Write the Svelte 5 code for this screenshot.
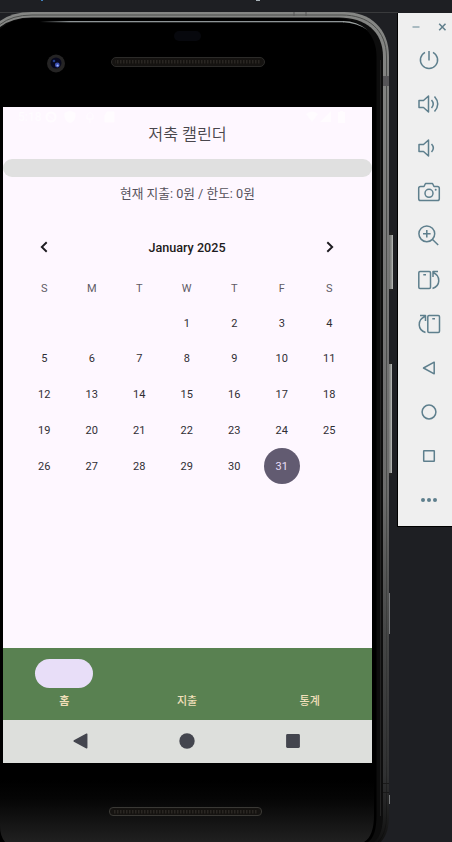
<script>
  const weekdays = ['S', 'M', 'T', 'W', 'T', 'F', 'S'];
  const days = [...Array(3).fill(null), ...Array.from({ length: 31 }, (_, i) => i + 1)];
  const selected = 31;
  const tabs = ['홈', '지출', '통계'];
  const tools = ['power', 'volup', 'voldown', 'camera', 'zoom', 'rotl', 'rotr', 'back', 'home', 'overview', 'more'];
</script>

<div class="desk">
  <svg class="frame" width="398" height="842" viewBox="0 0 398 842" aria-hidden="true">
    <defs>
      <linearGradient id="edge" x1="0" y1="0" x2="0" y2="1">
        <stop offset="0" stop-color="#858684" />
        <stop offset="0.3" stop-color="#787878" />
        <stop offset="0.58" stop-color="#6c6c6c" />
        <stop offset="0.75" stop-color="#454646" />
        <stop offset="0.92" stop-color="#303132" />
        <stop offset="1" stop-color="#111" />
      </linearGradient>
      <linearGradient id="rim" x1="0" y1="0" x2="0" y2="1">
        <stop offset="0" stop-color="#4b4d4b" />
        <stop offset="0.6" stop-color="#4b4d4b" />
        <stop offset="0.9" stop-color="#2a2b2b" />
        <stop offset="1" stop-color="#0c0c0c" />
      </linearGradient>
      <linearGradient id="chin" x1="0" y1="0" x2="0" y2="1">
        <stop offset="0" stop-color="#000" />
        <stop offset="0.3" stop-color="#050505" />
        <stop offset="1" stop-color="#202020" />
      </linearGradient>
      <linearGradient id="glint" x1="0" y1="0" x2="1" y2="0">
        <stop offset="0" stop-color="#8e9496" stop-opacity="0" />
        <stop offset="0.1" stop-color="#8e9496" />
        <stop offset="1" stop-color="#8e9496" />
      </linearGradient>
      <linearGradient id="button" x1="0" y1="0" x2="1" y2="0">
        <stop offset="0" stop-color="#686a68" />
        <stop offset="0.7" stop-color="#969896" />
        <stop offset="1" stop-color="#c0c2c0" />
      </linearGradient>
      <pattern id="mesh" width="3" height="5" patternUnits="userSpaceOnUse">
        <rect width="3" height="5" fill="#14120f" />
        <rect width="1.5" height="3.5" fill="#292622" />
      </pattern>
    </defs>
    <path d="M0 12.5H398" stroke="#393a3c" />
    <rect x="387" y="232" width="6" height="59" rx="1" fill="#222" />
    <rect x="389" y="235" width="4" height="54" fill="url(#button)" />
    <rect x="387" y="361" width="5" height="115" rx="1" fill="#222" />
    <rect x="388" y="364" width="4" height="109" fill="url(#button)" />
    <path d="M389.5 593v41M389.5 795v9" stroke="#77797b" />
    <path d="M0 21Q12 12 32 12H344C370 12 389 28 389 57V815C389 827 387 835 381 842H0Z" fill="url(#edge)" />
    <path d="M0 24.5Q12 15 32 15H342C368 15 386.500 30 386.500 57V815C386.500 827 384 836 378 842" fill="none" stroke="url(#rim)" />
    <path d="M0 27Q12 17.500 32 17.500H339C365 17.500 383 31 383 57V815C383 828 380 837 374 842H0Z" fill="#0d0d0d" />
    <path d="M0 29Q12 18 32 18H337C362 20 376.500 34 376.500 57V815C376.500 828 374 838 368 842H0Z" fill="#000" />
    <path d="M380.500 60V816" stroke="#222" />
    <path d="M0 780H374V815C374 828 371 838 364 842H5Q0 836 0 826Z" fill="url(#chin)" />
    <rect x="40" y="21" width="304" height="1.300" fill="url(#glint)" />
    <path d="M343 21Q357 21 367.500 30Q357 23 343 22.300Z" fill="#9ba1a0" />
    <path d="M294 12v4M306 12v4" stroke="#555" />
    <rect x="383" y="76" width="6" height="10" fill="#555457" />
    <path d="M383 783.500h6M383 792.500h6" stroke="#191919" />
    <rect x="174" y="31" width="27" height="10" rx="5" fill="#07080d" />
    <circle cx="56" cy="63.500" r="9" fill="#252424" />
    <circle cx="56" cy="63" r="5.500" fill="#07081d" />
    <circle cx="54" cy="61" r="1.300" fill="#213c89" />
    <circle cx="57.300" cy="65" r="2.400" fill="#3c50b4" />
    <circle cx="57.600" cy="65.500" r="1.100" fill="#a7bdff" />
    <rect x="111.500" y="57.500" width="153" height="9" rx="4.500" fill="#151311" stroke="#2c2b29" />
    <rect x="115" y="60" width="146" height="4" fill="url(#mesh)" />
    <rect x="109.500" y="807.500" width="152" height="8" rx="3.500" fill="#151311" stroke="#3a3935" />
    <rect x="113" y="809" width="145" height="5" fill="url(#mesh)" />
    <rect x="41" y="0" width="2" height="1" fill="#4382bd" />
    <rect x="256" y="0" width="4" height="1" fill="#a8b2b8" />
  </svg>

  <main class="screen">
    <div class="status">
      <span>5:18</span>
      <svg width="76" height="14" viewBox="0 0 76 14" fill="none" stroke="#fffcff">
        <circle cx="9" cy="7" r="4.500" stroke-width="2" /><path d="M5 4l8 7" />
        <path d="M23 3l5-2 5 2v4q0 4-5 6q-5-2-5-6z" fill="#fffcff" />
        <path d="M45 5q3-5 6 0v4h-6zM48 9v4" />
        <path d="M65 2h7v10h-9v-7z" fill="#fffcff" />
      </svg>
      <svg class="signal" width="42" height="14" viewBox="0 0 42 14" fill="#fffcff">
        <path d="M1 4q6-5 12 0l-6 8zM15 12L26 1v11zM33 2h2v-1h3v1h2v11h-7z" />
      </svg>
    </div>
    <h1>저축 캘린더</h1>
    <div class="progress"></div>
    <p class="summary">현재 지출: 0원 / 한도: 0원</p>

    <section class="calendar">
      <header>
        <svg width="16" height="16" viewBox="0 0 16 16"><path d="M10.700 3.200L5.800 8l4.900 4.800" /></svg>
        <span>January 2025</span>
        <svg width="16" height="16" viewBox="0 0 16 16"><path d="M5.300 3.200L10.200 8l-4.900 4.800" /></svg>
      </header>
      <div class="week">
        {#each weekdays as d}<span>{d}</span>{/each}
      </div>
      <div class="days">
        {#each days as day}
          <span class:selected={day === selected}>{day ?? ''}</span>
        {/each}
      </div>
    </section>

    <nav class="tabs">
      {#each tabs as tab, i}
        <div class="tab">
          <i class:active={i === 0}></i>
          <span class:bold={i === 0}>{tab}</span>
        </div>
      {/each}
    </nav>
    <div class="system">
      <svg width="18" height="18" viewBox="0 0 18 18"><path d="M2.200 9L14.700 2.200V15.800Z" stroke="#43454e" stroke-width="1.500" stroke-linejoin="round" /></svg>
      <svg width="18" height="18" viewBox="0 0 18 18"><circle cx="9" cy="9" r="7.700" /></svg>
      <svg width="18" height="18" viewBox="0 0 18 18"><rect x="2.100" y="2.100" width="13.800" height="13.800" rx="1.300" /></svg>
    </div>
  </main>

  <aside>
    <div class="window">
      <svg width="36" height="12" viewBox="0 0 36 12">
        <path d="M0.500 6h7" stroke="#92a9b2" stroke-width="1.500" />
        <path d="M27.200 2.700l6.300 6.600M33.500 2.700l-6.300 6.600" stroke="#607f8c" stroke-width="1.500" />
      </svg>
    </div>
    {#each tools as tool}
      <div class="tool">
        <svg width="24" height="24" viewBox="0 0 24 24">
          {#if tool === 'power'}
            <path d="M12 3v9.500M8 4.300a8.600 8.600 0 1 0 8 0" />
          {:else if tool === 'volup'}
            <path d="M2 8.500h4.500l5-4.500v16l-5-4.500H2zM14.500 8q3.500 4 0 8M17.500 4.500q6.500 7.500 0 15" />
          {:else if tool === 'voldown'}
            <path d="M2 8.500h4.500l5-4.500v16l-5-4.500H2zM14.500 8q3.700 4 0 8" />
          {:else if tool === 'camera'}
            <path d="M7 6.500L8.500 3.500h7L17 6.500h3.500q1.800 0 1.800 1.800v10.400q0 1.800-1.800 1.800h-17q-1.800 0-1.800-1.800V8.300q0-1.800 1.800-1.800z" />
            <circle cx="12" cy="13.300" r="4" /><circle class="fill" cx="18.700" cy="9.800" r="1" />
          {:else if tool === 'zoom'}
            <circle cx="9.800" cy="9.800" r="7.900" /><path d="M15.500 15.500l5.700 5.500M9.800 6v7.600M6 9.800h7.600" />
          {:else if tool === 'rotl'}
            <rect x="1.800" y="3.500" width="11.700" height="17" rx="1.200" />
            <path d="M6.300 6.800h2.700M15.500 20.500c8-2.500 8.500-12.500.7-16M21 3.600h-5v5.500" />
          {:else if tool === 'rotr'}
            <rect x="10.800" y="3.500" width="11.700" height="17" rx="1.200" />
            <path d="M15.300 6.800h2.700M8.500 20.500c-8-2.500-8.500-12.500-.7-16M3 3.600h5.500v5.500" />
          {:else if tool === 'back'}
            <path d="M6.500 12L17.200 6.200v11.600z" />
          {:else if tool === 'home'}
            <circle cx="12" cy="12" r="6.900" />
          {:else if tool === 'overview'}
            <rect x="6.700" y="6.700" width="10.600" height="10.600" rx=".4" />
          {:else}
            <g class="fill"><circle cx="6" cy="12" r="2" /><circle cx="12" cy="12" r="2" /><circle cx="18" cy="12" r="2" /></g>
          {/if}
        </svg>
      </div>
    {/each}
  </aside>
</div>

<style>
  :global(body) { margin: 0; background: #1e1f23; }
  .desk {
    position: relative;
    display: flex;
    align-items: flex-start;
    width: 452px;
    height: 842px;
    overflow: hidden;
    background: #1e1f23;
    font-family: Roboto, 'Noto Sans CJK KR', sans-serif;
  }
  svg { display: block; flex: none; }
  .frame { position: absolute; left: 0; top: 0; }
  .screen {
    position: relative;
    display: flex;
    flex: none;
    flex-direction: column;
    width: 369px;
    height: 656px;
    margin: 107px 26px 0 3px;
    background: #fef7ff;
    color: #1d1b20;
  }
  .status {
    display: flex;
    align-items: center;
    height: 14px;
    padding: 3px 25px 0 15px;
    color: #fffcff;
    font-size: 12px;
    font-weight: 500;
  }
  .status .signal { margin-left: auto; }
  h1 {
    height: 20px;
    margin: 1px 0 0;
    font-size: 16.200px;
    line-height: 20px;
    font-weight: 350;
    text-align: center;
    color: #49464c;
    font-family: Roboto, 'Noto Sans CJK KR', sans-serif;
  }
  .progress {
    height: 18px;
    margin-top: 14px;
    border-radius: 9px;
    background: #e0e0e0;
  }
  .summary {
    height: 18px;
    margin: 8px 0 0;
    font-size: 12.700px;
    line-height: 18px;
    text-align: center;
    color: #55515b;
  }
  .calendar { padding: 24px 19px 0 17.500px; }
  header {
    display: flex;
    align-items: center;
    justify-content: space-between;
    height: 40px;
    padding: 0 15px 0 15.500px;
    font-size: 12.600px;
    font-weight: 500;
  }
  header path { fill: none; stroke: #1d1b20; stroke-width: 1.900; }
  .week, .days { display: grid; grid-template-columns: repeat(7, 1fr); justify-items: center; }
  .week { height: 20px; margin-top: 12px; font-size: 11px; line-height: 20px; color: #605c65; }
  .days { margin-top: 6px; grid-auto-rows: 35.850px; font-size: 11px; color: #302e34; }
  .days span {
    display: flex;
    align-items: center;
    justify-content: center;
    width: 36px;
    height: 36px;
    border-radius: 50%;
  }
  .days .selected { background: #625b71; color: #e8def8; }
  .tabs {
    display: flex;
    height: 72px;
    margin-top: auto;
    padding-right: 1px;
    background: #598151;
  }
  .tab { flex: 1; display: flex; flex-direction: column; align-items: center; padding-top: 11px; }
  .tab i { width: 58px; height: 29px; border-radius: 15px; }
  .tab .active { background: #e8def8; }
  .tab span { margin-top: 5px; font-size: 11px; line-height: 18px; font-weight: 500; color: #f0dfba; }
  .tab .bold { font-weight: 700; }
  .system {
    display: flex;
    align-items: center;
    justify-content: space-between;
    box-sizing: border-box;
    height: 43.500px;
    padding: 0 70px 1px 69px;
    background: #dddfdc;
    fill: #43454e;
  }
  aside {
    box-sizing: border-box;
    flex: none;
    width: 55px;
    height: 514px;
    margin-top: 13px;
    border-left: 1px solid #000;
    border-bottom: 1px solid #000;
    background: #efefef;
  }
  .screen + aside { margin-left: -1px; }
  .window { display: flex; align-items: center; height: 25px; padding: 2px 0 0 14px; box-sizing: border-box; }
  .window svg { overflow: visible; }
  .tool { display: flex; height: 44px; align-items: center; padding-left: 18.500px; }
  .tool svg { fill: none; stroke: #5e7f8d; stroke-width: 1.500; stroke-linejoin: round; }
  .tool .fill { fill: #5e7f8d; stroke: none; }
</style>
